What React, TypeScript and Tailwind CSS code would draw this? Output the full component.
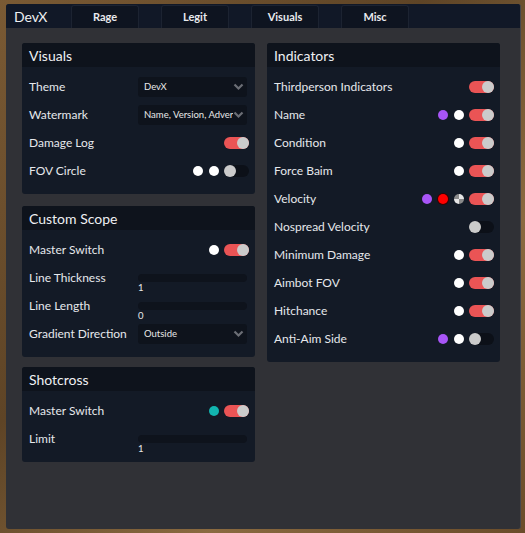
import React from "react";

type Dot = "white" | "purple" | "red" | "teal" | "alpha";

function ColorDot({ c }: { c: Dot }) {
  if (c === "alpha") {
    return (
      <span className="w-[10px] h-[10px] rounded-full bg-[conic-gradient(#e6e6e6_0_25%,#8a8a8a_25%_50%,#e6e6e6_50%_75%,#8a8a8a_75%)]" />
    );
  }
  const cls =
    c === "white"
      ? "bg-white"
      : c === "purple"
      ? "bg-[#a855f7]"
      : c === "red"
      ? "bg-[#ff0000] ring-1 ring-[#3a0000]"
      : "bg-[#12b5b0]";
  return <span className={"w-[10px] h-[10px] rounded-full " + cls} />;
}

function Toggle({ on }: { on: boolean }) {
  return (
    <span
      className={
        "ml-[5px] w-[25px] h-[12px] rounded-full flex items-center " +
        (on ? "bg-[#ea5455] justify-end" : "bg-[#0c1018] justify-start")
      }
    >
      <span className="w-[12px] h-[12px] rounded-full bg-[#cbcbcb]" />
    </span>
  );
}

function Dropdown({ value }: { value: string }) {
  return (
    <div className="w-[109px] h-[20px] rounded-[3px] bg-[#0e131c] flex items-center pl-[6px] pr-[3px] mr-[2px]">
      <span className="flex-1 overflow-hidden whitespace-nowrap text-[9.5px] text-[#e8e8e8]">{value}</span>
      <svg width="11" height="8" viewBox="0 0 11 8" className="shrink-0">
        <path d="M1.5 1.5 L5.5 5.5 L9.5 1.5" stroke="#6b6e75" strokeWidth="2.2" fill="none" />
      </svg>
    </div>
  );
}

function Slider({ value }: { value: string }) {
  return (
    <div className="relative w-[109px] h-[8px] rounded-full bg-[#0e131c] mr-[2px]">
      <span className="absolute left-0 top-[9px] text-[9.5px] text-[#e8e8e8] leading-none">{value}</span>
    </div>
  );
}

type Row = {
  label: string;
  dots?: Dot[];
  toggle?: boolean;
  dropdown?: string;
  slider?: string;
};

function Panel({ title, rows }: { title: string; rows: Row[] }) {
  return (
    <div className="rounded-[3px] bg-[#131a26] overflow-hidden">
      <div className="h-[24px] bg-[#0e131c] flex items-center pl-[7px] text-[14px] text-[#eef0f3]">
        {title}
      </div>
      <div className="pt-[6px] pb-[9px] px-[7px] pr-[6px]">
        {rows.map((r) => (
          <div key={r.label} className="h-[28px] flex items-center">
            <span className="flex-1 text-[12px] text-[#e6e8ec]">{r.label}</span>
            {r.dropdown && <Dropdown value={r.dropdown} />}
            {r.slider && <Slider value={r.slider} />}
            <div className="flex items-center gap-[6px]">
              {(r.dots || []).map((d, i) => (
                <ColorDot key={i} c={d} />
              ))}
            </div>
            {r.toggle !== undefined && <Toggle on={r.toggle} />}
          </div>
        ))}
      </div>
    </div>
  );
}

export default function App() {
  const tabs = ["Rage", "Legit", "Visuals", "Misc"];
  return (
    <div
      className="w-[525px] h-[533px] pt-[4px] pl-[6px] bg-[linear-gradient(135deg,#7a5a34,#5e4426_40%,#8a6a40_70%,#6a4c2a)]"
      style={{ fontFamily: "Lato, 'Noto Sans', sans-serif" }}
    >
      <div className="w-[515px] h-[525px] rounded-[3px] overflow-hidden bg-[#303136] flex flex-col border-r border-[#45464b]">
        <div className="h-[24px] bg-[#111827] flex items-stretch shrink-0">
          <div className="w-[65px] flex items-center pl-[8px] text-[14px] text-[#eef0f3]">DevX</div>
          <div className="flex gap-[22px] pt-[1px]">
            {tabs.map((t) => (
              <div
                key={t}
                className="w-[68px] rounded-t-[3px] bg-[#0e1420] border border-b-0 border-[#1c2331] flex items-center justify-center text-[11px] font-bold text-[#e8eaee]"
              >
                {t}
              </div>
            ))}
          </div>
        </div>
        <div className="flex gap-[12px] pt-[15px] pl-[16px]">
          <div className="w-[233px] flex flex-col">
            <Panel
              title="Visuals"
              rows={[
                { label: "Theme", dropdown: "DevX" },
                { label: "Watermark", dropdown: "Name, Version, Adver" },
                { label: "Damage Log", toggle: true },
                { label: "FOV Circle", dots: ["white", "white"], toggle: false },
              ]}
            />
            <div className="h-[12px]" />
            <Panel
              title="Custom Scope"
              rows={[
                { label: "Master Switch", dots: ["white"], toggle: true },
                { label: "Line Thickness", slider: "1" },
                { label: "Line Length", slider: "0" },
                { label: "Gradient Direction", dropdown: "Outside" },
              ]}
            />
            <div className="h-[10px]" />
            <Panel
              title="Shotcross"
              rows={[
                { label: "Master Switch", dots: ["teal"], toggle: true },
                { label: "Limit", slider: "1" },
              ]}
            />
          </div>
          <div className="w-[233px]">
            <Panel
              title="Indicators"
              rows={[
                { label: "Thirdperson Indicators", toggle: true },
                { label: "Name", dots: ["purple", "white"], toggle: true },
                { label: "Condition", dots: ["white"], toggle: true },
                { label: "Force Baim", dots: ["white"], toggle: true },
                { label: "Velocity", dots: ["purple", "red", "alpha"], toggle: true },
                { label: "Nospread Velocity", toggle: false },
                { label: "Minimum Damage", dots: ["white"], toggle: true },
                { label: "Aimbot FOV", dots: ["white"], toggle: true },
                { label: "Hitchance", dots: ["white"], toggle: true },
                { label: "Anti-Aim Side", dots: ["purple", "white"], toggle: false },
              ]}
            />
          </div>
        </div>
      </div>
    </div>
  );
}
